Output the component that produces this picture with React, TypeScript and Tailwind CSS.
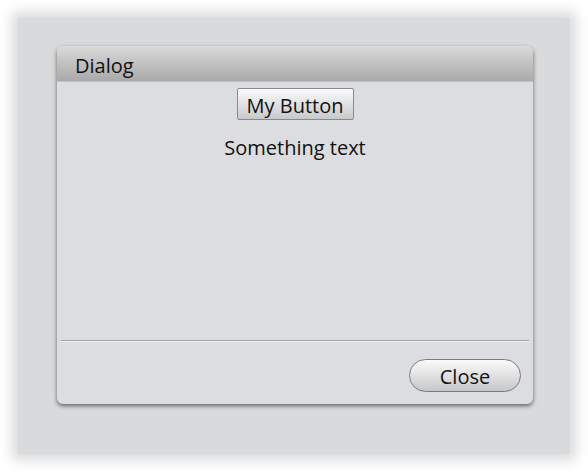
export default function App() {
  return (
    <div className="w-[588px] h-[472px] bg-white p-[18px]" style={{ fontFamily: '"Open Sans", "Noto Sans", sans-serif' }}>
      <div className="h-full bg-[#d9dadc] shadow-[0_0_12px_6px_#d9dadc] pt-[28px] pl-[39px]">
        {/* Dialog */}
        <div className="w-[476px] h-[358px] flex flex-col rounded-[6px] bg-[#dcdde0] shadow-[0_2px_4px_rgba(0,0,0,0.55)] overflow-hidden">
          <div className="h-[36px] shrink-0 bg-gradient-to-b from-[#dadada] to-[#a9a9a9] border-b border-[#c2c2c2] flex items-center pl-[18px] pt-[4px]">
            <span className="text-[20px] text-[#111] leading-none">Dialog</span>
          </div>
          <div className="flex-1 flex flex-col items-center pt-[6px]">
            <button className="w-[117px] h-[32px] pt-[3px] rounded-[2px] border border-[#8a8a8a] bg-gradient-to-b from-[#fbfbfb] to-[#c8c9cb] text-[20px] text-[#111] leading-none">
              My Button
            </button>
            <p className="mt-[18px] text-[20px] text-[#111] leading-none">Something text</p>
          </div>
          <div className="mx-[4px] h-[2px] border-t border-[#a3a3a5] bg-[#eeeeef]" />
          <div className="h-[62px] flex items-end justify-end pr-[12px] pb-[12px]">
            <button className="w-[112px] h-[33px] pt-[3px] rounded-full border border-[#7b7b7b] bg-gradient-to-b from-[#fbfbfb] to-[#c6c7c9] text-[20px] text-[#111] leading-none">
              Close
            </button>
          </div>
        </div>
      </div>
    </div>
  )
}
